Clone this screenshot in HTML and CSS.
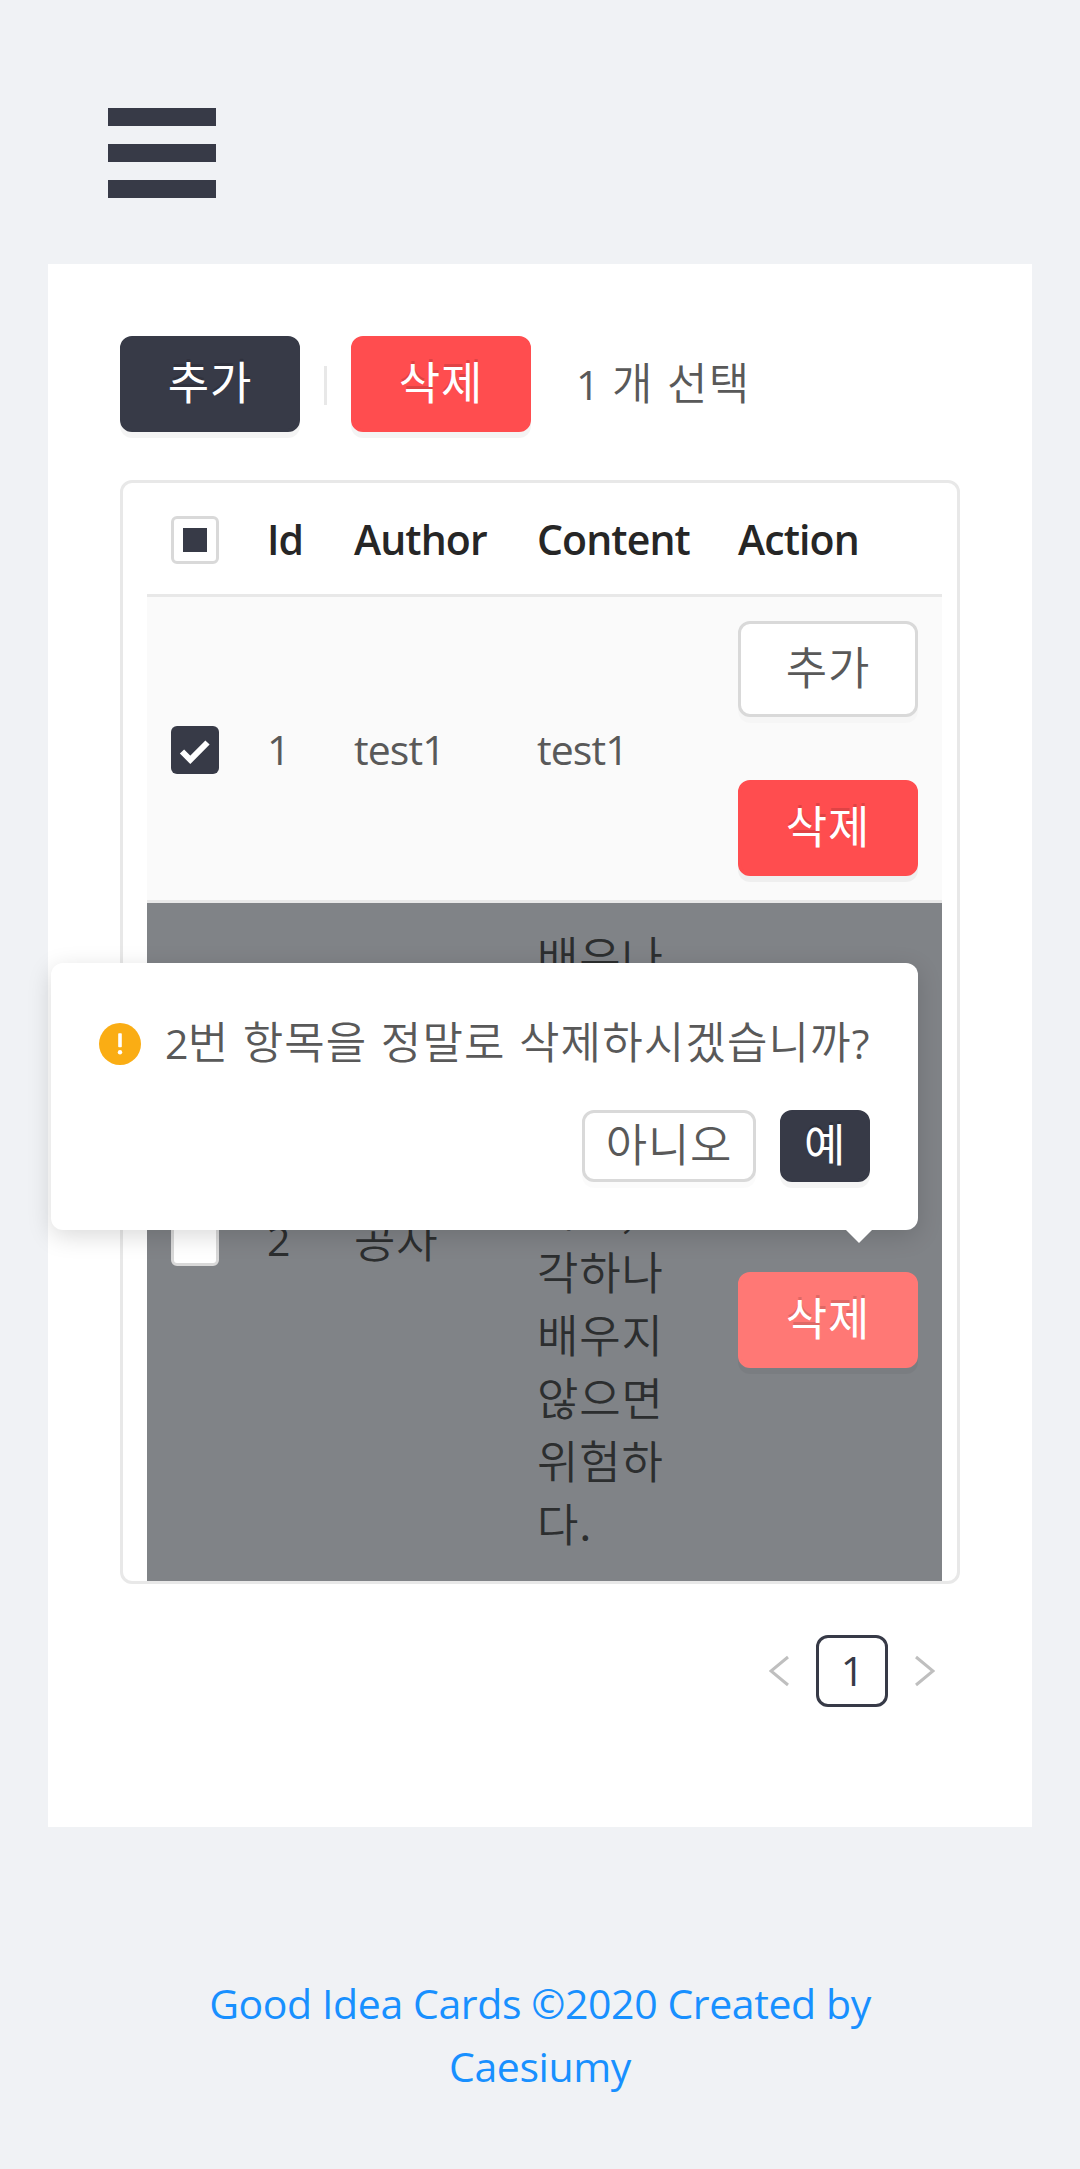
FILE: index.html
```html
<!DOCTYPE html>
<html lang="ko">
<head>
<meta charset="utf-8">
<title>Good Idea Cards</title>
<link rel="stylesheet" href="styles.css">
</head>
<body>
<header class="header">
  <button class="burger" aria-label="menu"><i></i><i></i><i></i></button>
</header>
<main class="panel">
  <div class="toolbar">
    <button class="btn btn-dark">추가</button>
    <span class="divider"></span>
    <button class="btn btn-red">삭제</button>
    <span class="selected"><span class="num">1</span> 개 선택</span>
  </div>
  <div class="table">
    <div class="row head">
      <div class="cell"><span class="check check-some"></span></div>
      <div class="cell">Id</div>
      <div class="cell">Author</div>
      <div class="cell">Content</div>
      <div class="cell">Action</div>
    </div>
    <div class="row picked">
      <div class="cell"><span class="check check-on"><svg viewBox="0 0 48 48"><path d="M11 25.5l8.3 8.3L36.5 16.5" fill="none" stroke="#fff" stroke-width="6"/></svg></span></div>
      <div class="cell">1</div>
      <div class="cell">test1</div>
      <div class="cell">test1</div>
      <div class="cell actions">
        <button class="btn">추가</button>
        <button class="btn btn-red">삭제</button>
      </div>
    </div>
    <div class="row dim">
      <div class="cell"><span class="check"></span></div>
      <div class="cell">2</div>
      <div class="cell ko">공자</div>
      <div class="cell ko">배우나<br>생각하<br>지 않으<br>면 공허<br>하고,<br>각하나<br>배우지<br>않으면<br>위험하<br>다.</div>
      <div class="cell actions">
        <button class="btn">추가</button>
        <div class="anchor">
          <button class="btn btn-pink">삭제</button>
          <div class="popover">
            <div class="message">
              <svg class="warn" viewBox="0 0 42 42"><circle cx="21" cy="21" r="21" fill="#faad14"/><rect x="19.2" y="10.3" width="3.6" height="14" rx=".8" fill="#fff"/><circle cx="21" cy="29.3" r="2.2" fill="#fff"/></svg>
              <span class="question"><span class="num">2</span>번 항목을 정말로 삭제하시겠습니까<span class="num">?</span></span>
            </div>
            <div class="choices">
              <button class="btn small">아니오</button>
              <button class="btn small btn-dark">예</button>
            </div>
          </div>
        </div>
      </div>
    </div>
  </div>
  <nav class="pager">
    <svg class="arrow" viewBox="0 0 20 32"><path d="M19 2L2 16l17 14" fill="none" stroke="#bfbfbf" stroke-width="3"/></svg>
    <span class="page">1</span>
    <svg class="arrow" viewBox="0 0 20 32"><path d="M1 2l17 14L1 30" fill="none" stroke="#bfbfbf" stroke-width="3"/></svg>
  </nav>
</main>
<footer class="footer">Good Idea Cards ©2020 Created by<br>Caesiumy</footer>
</body>
</html>
```
FILE: styles.css
```css
* { box-sizing: border-box; }
body {
  margin: 0;
  height: 2169px;
  background: #f0f2f5;
  color: #595959;
  font: 400 41px/63px "Open Sans", "Noto Sans", sans-serif;
  letter-spacing: -.9px;
}
button { margin: 0; padding: 0; border: 0; background: none; font: inherit; color: inherit; }
.header { height: 264px; padding: 108px; }
.burger { display: flex; flex-direction: column; gap: 18px; width: 108px; }
.burger i { height: 18px; background: #373a47; }
.panel { margin: 0 48px; height: 1563px; padding: 72px; background: #fff; }
.toolbar { display: flex; align-items: center; height: 96px; margin-bottom: 48px; }
.divider { width: 3px; height: 39px; margin: 3px 24px 0; background: #e8e8e8; }
.selected { margin-left: 45px; padding-bottom: 6px; white-space: pre; }
.btn {
  display: block;
  width: 180px;
  height: 96px;
  border: 3px solid #d9d9d9;
  border-radius: 12px;
  background: #fff;
  box-shadow: 0 6px 0 rgba(0, 0, 0, .016);
  line-height: 84px;
  padding-bottom: 6px;
}
.btn, .ko, .selected, .message { font-family: "Noto Sans CJK KR", sans-serif; font-size: 45px; font-weight: 350; letter-spacing: .8px; }
.selected, .message { font-size: 44px; letter-spacing: 1.1px; }
.num { font: 400 41px/1 "Open Sans", sans-serif; letter-spacing: -.8px; }
.btn-dark, .btn-red, .btn-pink { color: #fff; font-weight: 400; text-shadow: 0 -3px 0 rgba(0, 0, 0, .12); box-shadow: 0 6px 0 rgba(0, 0, 0, .045); }
.btn-dark { background: #373a47; border-color: #373a47; }
.btn-red { background: #ff4d4f; border-color: #ff4d4f; }
.btn-pink { background: #ff7875; border-color: #ff7875; }
.table { border: 3px solid #e8e8e8; border-radius: 12px; padding: 0 15px 0 24px; height: 1104px; }
.row { display: grid; grid-template-columns: 96px 87px 183px 201px 228px; align-items: center; }
.cell { padding: 24px; white-space: nowrap; }
.head { height: 114px; padding-top: 1px; border-bottom: 3px solid #e8e8e8; color: #262626; font-weight: 600; letter-spacing: -.9px; }
.picked { height: 306px; border-bottom: 3px solid #e8e8e8; background: #fafafa; }
.picked > .cell:not(.actions) { padding-top: 26px; }
.picked .check { margin-top: 1px; }
.dim { height: 678px; background: #808387; color: #2c2e2f; }
.dim .cell { padding: 22px 24px 25px; }
.dim .ko { padding: 20px 24px 27px; }
.actions { display: flex; flex-direction: column; gap: 63px; color: #595959; }
.check { display: block; width: 48px; height: 48px; border: 3px solid #d9d9d9; border-radius: 6px; background: #fff; }
.dim .check { margin-top: 3px; }
.check-some { padding: 9px; }
.check-some::before { content: ""; display: block; width: 24px; height: 24px; background: #373a47; }
.check-on { border: 0; background: #373a47; }
.check-on svg { display: block; }
.anchor { position: relative; }
.popover {
  position: absolute;
  right: 0;
  bottom: 138px;
  width: 867px;
  height: 267px;
  padding: 48px;
  border-radius: 12px;
  background: #fff;
  box-shadow: 0 6px 24px rgba(0, 0, 0, .15);
}
.popover::after {
  content: "";
  position: absolute;
  right: 45px;
  bottom: -13px;
  border: solid transparent;
  border-width: 14px 14px 0;
  border-top-color: #fff;
}
.message { display: flex; align-items: center; gap: 24px; height: 63px; white-space: nowrap; }
.question { padding-bottom: 4px; }
.warn { width: 42px; height: 42px; flex: none; margin-top: 3px; }
.choices { display: flex; justify-content: flex-end; gap: 24px; margin-top: 36px; }
.small { width: 174px; height: 72px; line-height: 60px; }
.small.btn-dark { width: 90px; }
.pager { display: flex; justify-content: flex-end; align-items: center; gap: 27px; margin-top: 51px; padding-right: 25px; }
.arrow { width: 20px; height: 32px; }
.page { width: 72px; height: 72px; border: 3px solid #373a47; border-radius: 12px; color: #373a47; text-align: center; line-height: 65px; }
.footer { padding-top: 145px; text-align: center; color: #1890ff; letter-spacing: -.4px; }
```
